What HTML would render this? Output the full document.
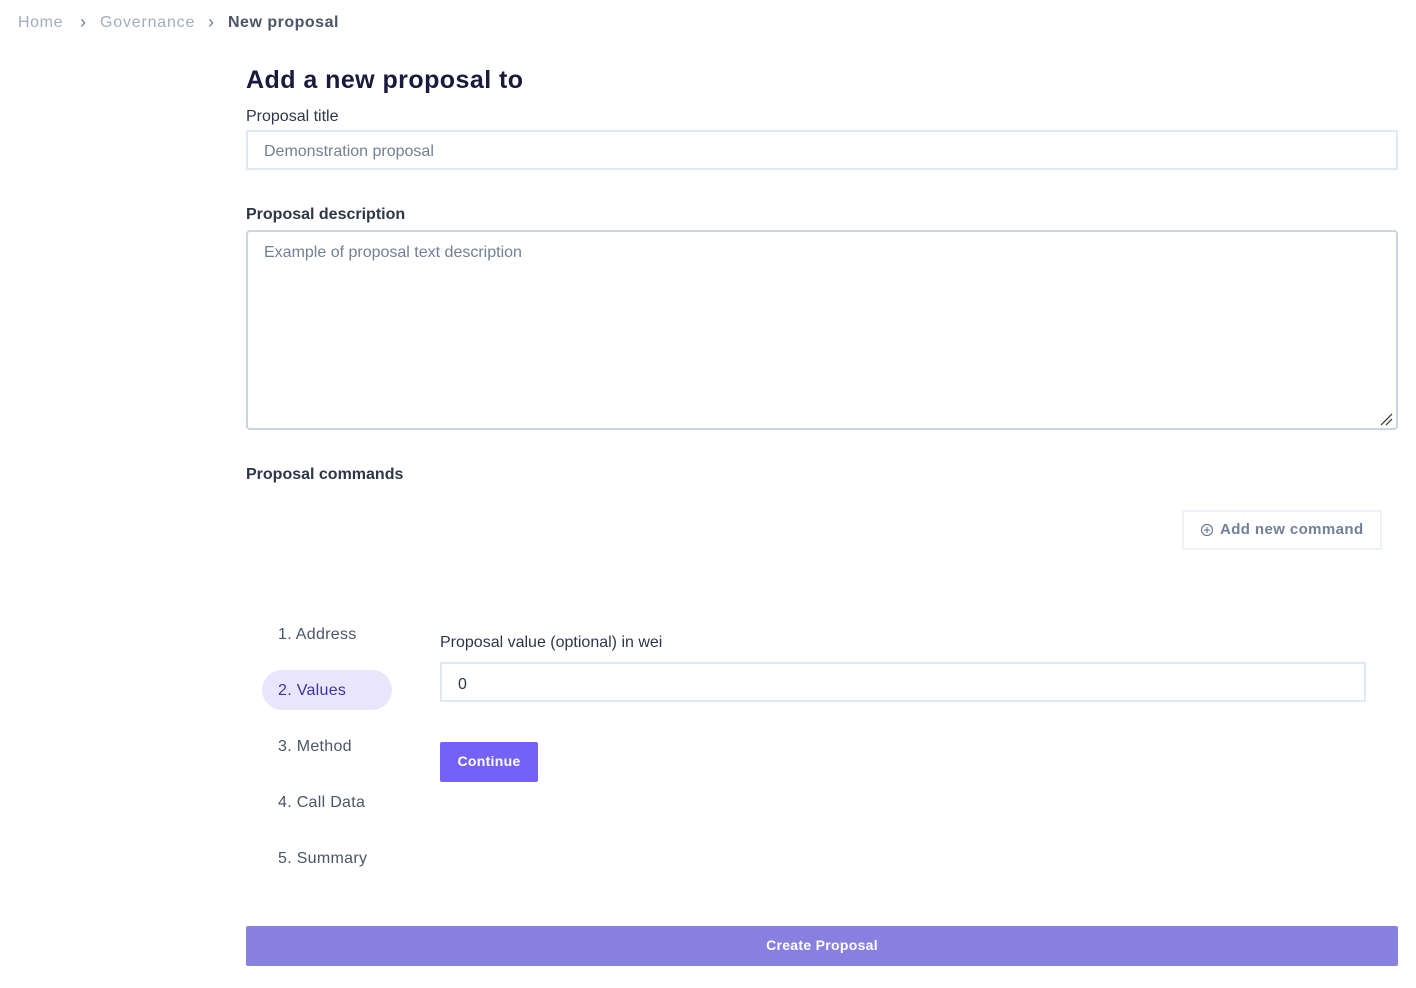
<!DOCTYPE html>
<html><head><meta charset="utf-8"><style>
*{box-sizing:border-box;margin:0;padding:0}
body{width:1416px;height:988px;background:#fff;font-family:"Liberation Sans",sans-serif;position:relative;overflow:hidden;color:#2d3748}
.a{position:absolute;white-space:nowrap}
.inp{position:absolute;border:2px solid #e2e8f0;background:#fff;font-size:16px;color:#718096;padding-left:16px}
</style></head><body>
<div class="a" style="left:18px;top:14px;font-size:16px;color:#a0aec0;letter-spacing:0.6px">Home</div>
<div class="a" style="left:80px;top:12px;font-size:18px;color:#718096">›</div>
<div class="a" style="left:100px;top:14px;font-size:16px;color:#a0aec0;letter-spacing:0.8px">Governance</div>
<div class="a" style="left:208px;top:12px;font-size:18px;color:#718096">›</div>
<div class="a" style="left:228px;top:14px;font-size:16px;color:#4a5568;font-weight:bold;letter-spacing:0.5px">New proposal</div>
<div class="a" style="left:246px;top:66px;font-size:25px;color:#1a1a3d;font-weight:bold;letter-spacing:0.45px">Add a new proposal to</div>
<div class="a" style="left:246px;top:108px;font-size:16px">Proposal title</div>
<div class="inp" style="left:246px;top:130px;width:1152px;height:40px;line-height:40px">Demonstration proposal</div>
<div class="a" style="left:246px;top:206px;font-size:16px;font-weight:bold">Proposal description</div>
<div class="inp" style="left:246px;top:230px;width:1152px;height:200px;padding-top:12px;border-radius:4px;border-color:#cbd5e0">Example of proposal text description</div>
<svg class="a" style="left:1378px;top:411px" width="16" height="16"><path d="M3 14L14 3M8 14L14 8" stroke="#444" stroke-width="1.3"/></svg>
<div class="a" style="left:246px;top:466px;font-size:16px;font-weight:bold">Proposal commands</div>
<div class="a" style="left:1182px;top:510px;width:200px;height:40px;border:2px solid #edf2f7;font-size:15px;color:#718096;font-weight:bold;line-height:36px;padding-left:16px;letter-spacing:0.4px">
<svg width="14" height="14" style="vertical-align:-3px;margin-right:6px"><circle cx="7" cy="7" r="5.5" fill="none" stroke="#718096" stroke-width="1.2"/><path d="M7 4v6M4 7h6" stroke="#718096" stroke-width="1.2"/></svg>Add new command</div>
<div class="a" style="left:278px;top:626px;font-size:16px;color:#4a5568;letter-spacing:0.3px">1. Address</div>
<div class="a" style="left:262px;top:670px;width:130px;height:40px;border-radius:20px;background:#e9e6fc"></div>
<div class="a" style="left:278px;top:682px;font-size:16px;color:#3c34a3;letter-spacing:0.3px">2. Values</div>
<div class="a" style="left:278px;top:738px;font-size:16px;color:#4a5568;letter-spacing:0.3px">3. Method</div>
<div class="a" style="left:278px;top:794px;font-size:16px;color:#4a5568;letter-spacing:0.3px">4. Call Data</div>
<div class="a" style="left:278px;top:850px;font-size:16px;color:#4a5568;letter-spacing:0.3px">5. Summary</div>
<div class="a" style="left:440px;top:634px;font-size:16px">Proposal value (optional) in wei</div>
<div class="inp" style="left:440px;top:662px;width:926px;height:40px;line-height:42px;color:#2d3748">0</div>
<div class="a" style="left:440px;top:742px;width:98px;height:40px;background:#7361f8;color:#fff;font-size:14px;font-weight:bold;line-height:38px;text-align:center;border-radius:2px;letter-spacing:0.3px">Continue</div>
<div class="a" style="left:246px;top:926px;width:1152px;height:40px;background:#8880e0;color:#fff;font-size:14px;font-weight:bold;line-height:38px;text-align:center;border-radius:2px;letter-spacing:0.3px">Create Proposal</div>
</body></html>
